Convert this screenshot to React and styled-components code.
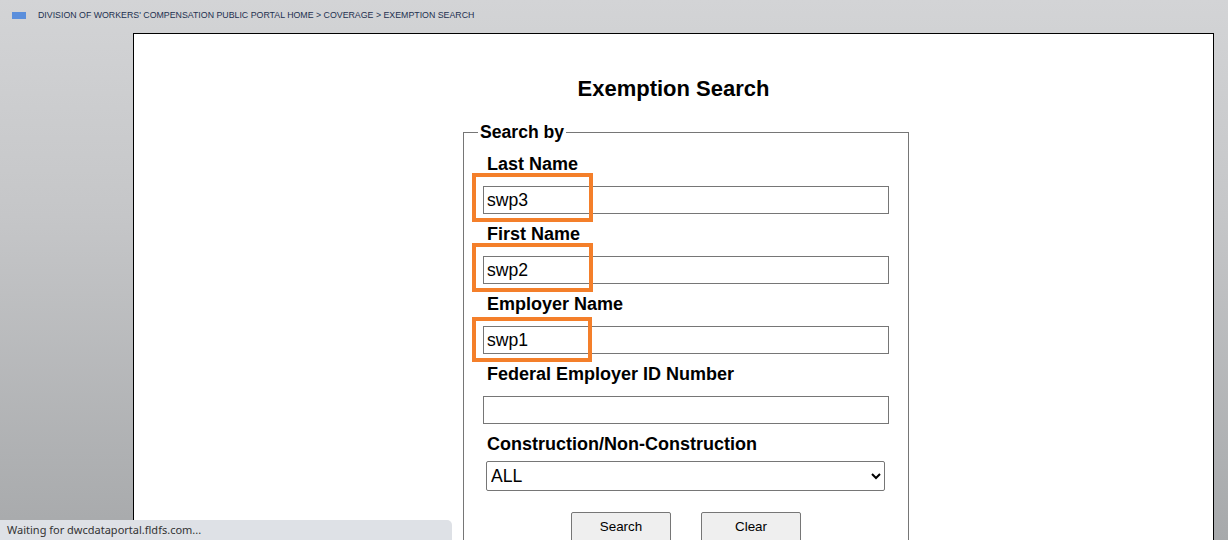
import React from "react";
import styled, { createGlobalStyle } from "styled-components";

const GlobalStyle = createGlobalStyle`
  html, body {
    margin: 0;
    height: 100%;
  }
  body {
    font-family: "Liberation Sans", Arial, sans-serif;
    background: linear-gradient(180deg, #d3d4d6 0%, #c5c6c8 40%, #a7a9ab 100%);
    overflow: hidden;
  }
`;

const Page = styled.div`
  height: 540px;
  display: flex;
  flex-direction: column;
  overflow: hidden;
`;

const Crumbs = styled.div`
  flex-shrink: 0;
  display: flex;
  align-items: center;
  height: 33px;
  padding: 0 0 3px 12px;
  box-sizing: border-box;
  font-size: 8.8px;
  color: #1d3050;
`;

const CrumbIcon = styled.span`
  width: 14px;
  height: 7px;
  background: #5b8fdc;
  margin-right: 12px;
`;

const Panel = styled.main`
  margin-left: 133px;
  width: 1081px;
  flex: 1;
  min-height: 0;
  background: #fff;
  border: 1px solid #000;
  border-bottom: none;
  box-sizing: border-box;
  padding-top: 42px;
`;

const Title = styled.h1`
  margin: 0;
  text-align: center;
  font-size: 22px;
  line-height: 26px;
  font-weight: bold;
  color: #000;
`;

const Fieldset = styled.fieldset`
  margin: 20px 0 0 329px;
  width: 446px;
  box-sizing: border-box;
  border: 1px solid #767676;
  padding: 0 19px 0 19px;
`;

const Legend = styled.legend`
  font-size: 17.6px;
  font-weight: bold;
  padding: 0 2px;
  margin-left: -5px;
  line-height: 20px;
`;

const Label = styled.label`
  display: block;
  font-size: 18px;
  font-weight: bold;
  line-height: 20px;
  margin: ${(p) => (p.$first ? "12px" : "10px")} 0 ${(p) => (p.$tight ? "7px" : "12px")} 4px;
`;

const Field = styled.div`
  position: relative;
`;

const Input = styled.input`
  display: block;
  width: 406px;
  height: 28px;
  box-sizing: border-box;
  border: 1px solid #767676;
  padding: 0 3px;
  font-family: "Liberation Sans", Arial, sans-serif;
  font-size: 17.6px;
  color: #000;
  outline: none;
`;

const Highlight = styled.span`
  position: absolute;
  left: -11px;
  top: ${(p) => p.$top}px;
  width: ${(p) => p.$w}px;
  height: ${(p) => p.$h}px;
  box-sizing: border-box;
  border: 4px solid #f47f2a;
  pointer-events: none;
`;

const Select = styled.select`
  display: block;
  margin-left: 3px;
  width: 399px;
  height: 30px;
  box-sizing: border-box;
  border: 1px solid #767676;
  border-radius: 2px;
  background: #fff;
  font-family: "Liberation Sans", Arial, sans-serif;
  font-size: 17.6px;
  color: #000;
  padding: 0;
`;

const Buttons = styled.div`
  display: flex;
  justify-content: center;
  gap: 30px;
  margin-top: 21px;
  padding-bottom: 20px;
`;

const Button = styled.button`
  width: 100px;
  height: 32px;
  box-sizing: border-box;
  border: 1px solid #767676;
  border-radius: 2px;
  background: #efefef;
  font-family: "Liberation Sans", Arial, sans-serif;
  font-size: 13.4px;
  color: #000;
  padding: 0 0 4px;
`;

const Status = styled.div`
  position: fixed;
  left: 0;
  bottom: 0;
  width: 452px;
  height: 20px;
  background: #dee1e6;
  border-top-right-radius: 5px;
  font-family: "Noto Sans", "Open Sans", sans-serif;
  font-size: 11px;
  line-height: 20px;
  padding-left: 7px;
  box-sizing: border-box;
  color: #333;
`;

const fields = [
  { label: "Last Name", value: "swp3", box: { top: -13, w: 121, h: 49 } },
  { label: "First Name", value: "swp2", box: { top: -13, w: 121, h: 49 } },
  { label: "Employer Name", value: "swp1", box: { top: -9, w: 120, h: 45 } },
  { label: "Federal Employer ID Number", value: "" },
];

export default function App() {
  return (
    <>
      <GlobalStyle />
      <Page>
        <Crumbs>
          <CrumbIcon />
          DIVISION OF WORKERS' COMPENSATION PUBLIC PORTAL HOME &gt; COVERAGE &gt; EXEMPTION SEARCH
        </Crumbs>
        <Panel>
          <Title>Exemption Search</Title>
          <Fieldset>
            <Legend>Search by</Legend>
            {fields.map((f, i) => (
              <div key={f.label}>
                <Label $first={i === 0}>{f.label}</Label>
                <Field>
                  <Input defaultValue={f.value} />
                  {f.box && <Highlight $top={f.box.top} $w={f.box.w} $h={f.box.h} />}
                </Field>
              </div>
            ))}
            <Label $tight>Construction/Non-Construction</Label>
            <Select defaultValue="ALL">
              <option>ALL</option>
              <option>CONSTRUCTION</option>
              <option>NON-CONSTRUCTION</option>
            </Select>
            <Buttons>
              <Button>Search</Button>
              <Button>Clear</Button>
            </Buttons>
          </Fieldset>
        </Panel>
      </Page>
      <Status>Waiting for dwcdataportal.fldfs.com...</Status>
    </>
  );
}
